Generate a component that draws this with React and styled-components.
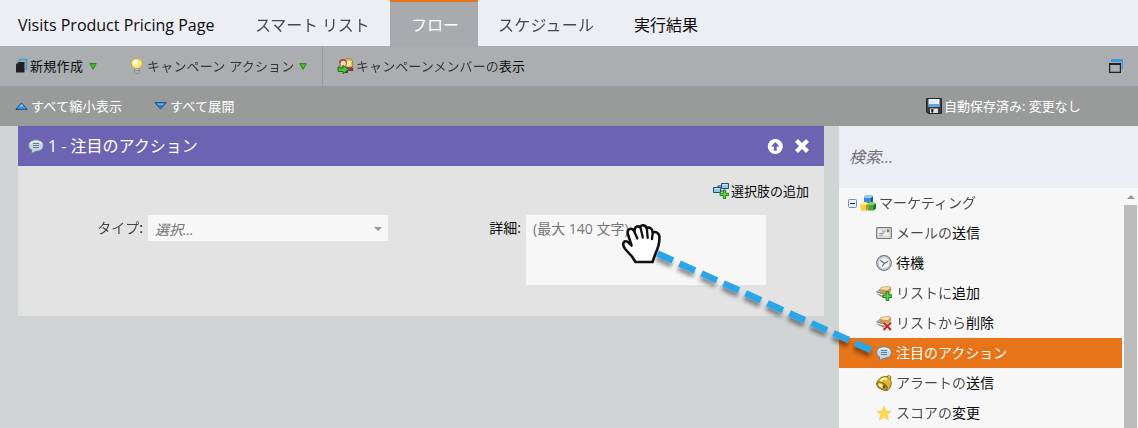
import React from "react";
import styled, { createGlobalStyle, css } from "styled-components";

const GlobalStyle = createGlobalStyle`
  * { box-sizing: border-box; }
  body {
    margin: 0;
    overflow: hidden;
    font-family: "Open Sans", "Noto Sans CJK JP", sans-serif;
    font-size: 13px;
    color: #0c0c0c;
  }
  svg { display: block; flex: none; }
`;

const Page = styled.div`
  position: relative;
  display: flex;
  flex-direction: column;
  width: 1138px;
  height: 428px;
  overflow: hidden;
  background: #d1d4d4;
`;

const TabBar = styled.nav`
  display: flex;
  height: 46px;
  padding-left: 18px;
  background: #edeef4;
`;

const Tab = styled.div`
  width: ${(p) => p.$width}px;
  height: 46px;
  padding-left: ${(p) => p.$indent || 0}px;
  padding-top: 3px;
  font-size: 16px;
  line-height: 44px;
  letter-spacing: ${(p) => p.$spacing || 0}px;
  white-space: nowrap;
  ${(p) =>
    p.$active &&
    css`
      padding-top: 1px;
      color: #fff;
      background: #a8aaad;
      border-top: 2px solid #e97318;
    `}
`;

const Toolbar = styled.div`
  display: flex;
  align-items: center;
  height: 40px;
  background: #abadb0;
`;

const ToolGroup = styled.div`
  display: flex;
  align-items: center;
  width: ${(p) => p.$width}px;
  height: 40px;
  padding-left: ${(p) => p.$indent}px;
  gap: ${(p) => p.$gap || 2}px;
  border-right: ${(p) => (p.$divider ? "1px solid #96989b" : "0")};
`;

const Label = styled.span`
  line-height: 20px;
  white-space: nowrap;
  letter-spacing: ${(p) => p.$spacing || 0}px;
`;

const KanaSpan = styled.span`
  opacity: 0.74;
`;

const Spacer = styled.div`
  flex: 1;
`;

const MenuCaret = styled.span`
  padding-left: ${(p) => p.$gap || 0}px;
`;

const WindowButton = styled.div`
  padding-right: 15px;
`;

const SubBar = styled(Toolbar)`
  background: #999a9a;
  color: #fff;
`;

const Main = styled.main`
  display: flex;
  height: 302px;
  padding-left: 18px;
`;

const Card = styled.section`
  width: 806px;
  height: 190px;
  margin-right: 15px;
  background: #e3e3e3;
`;

const CardHeader = styled.header`
  display: flex;
  align-items: center;
  height: 40px;
  padding: 0 14px 0 10px;
  gap: 4px;
  color: #fff;
  font-size: 16px;
  background: #6c64b3;
`;

const CardActions = styled.div`
  display: flex;
  align-items: center;
  gap: 11px;
`;

const AddChoice = styled.div`
  display: flex;
  justify-content: flex-end;
  align-items: center;
  height: 49px;
  padding-right: 15px;
  gap: 2px;
`;

const Form = styled.div`
  display: flex;
  align-items: flex-start;
  font-size: 14px;
`;

const FieldLabel = styled.label`
  width: ${(p) => p.$width}px;
  padding-right: 5px;
  line-height: 26px;
  text-align: right;
  white-space: nowrap;
`;

const Select = styled.div`
  display: flex;
  align-items: center;
  justify-content: space-between;
  width: 240px;
  height: 26px;
  padding: 1px 6px 0 7px;
  color: #737373;
  font-style: italic;
  background: #f7f7f7;
`;

const TextArea = styled.div`
  width: 240px;
  height: 70px;
  padding: 0 7px;
  line-height: 28px;
  color: #777;
  background: #f7f7f7;
`;

const Sidebar = styled.aside`
  width: 299px;
  background: #f7f7f7;
`;

const Search = styled.div`
  height: 62px;
  padding: 1px 0 0 10px;
  line-height: 60px;
  color: #70727a;
  font-size: 16px;
  font-style: italic;
  background: #edeef4;
`;

const TreeArea = styled.div`
  display: flex;
  height: 240px;
  overflow: hidden;
`;

const Tree = styled.div`
  width: 283px;
`;

const TreeRow = styled.div`
  display: flex;
  align-items: center;
  height: 30px;
  padding-left: ${(p) => (p.$root ? 9 : 37)}px;
  gap: ${(p) => (p.$root ? 3 : 4)}px;
  font-size: 14px;
  color: ${(p) => (p.$selected ? "#fff" : "#0c0c0c")};
  background: ${(p) => (p.$selected ? "#e77419" : "transparent")};
`;

const ScrollBar = styled.div`
  display: flex;
  flex-direction: column;
  width: 13px;
  margin-left: 2px;
`;

const ScrollArrow = styled.div`
  display: flex;
  align-items: center;
  justify-content: center;
  height: 17px;
`;

const ScrollThumb = styled.div`
  flex: 1;
  background: #bcbcbc;
`;

const DragOverlay = styled.svg`
  position: absolute;
  left: 0;
  top: 0;
  pointer-events: none;
`;

/* Kana runs are drawn lighter than kanji and latin. */
function Jp({ children, plain }) {
  if (plain) return children;
  return children
    .split(/([\u3040-\u30ff]+)/)
    .map((part, i) => (i % 2 ? <KanaSpan key={i}>{part}</KanaSpan> : part));
}

const Svg = ({ w = 16, h = 16, children }) => (
  <svg width={w} height={h} viewBox={`0 0 ${w} ${h}`}>
    {children}
  </svg>
);

const NewIcon = () => (
  <Svg w={13} h={16}>
    <path d="M4.500 3.500V1.500h7v9.500H10" fill="none" stroke="#3d9bdc" strokeWidth="1.600" />
    <path d="M4 4h5.500v10.500H1V6.500z" fill="#202123" />
    <path d="M1 6l3-2.500V6z" fill="#3a3c3e" />
  </Svg>
);

const CaretDown = () => (
  <Svg w={8} h={7}>
    <path d="M.7.6h6.600L4 6.300z" fill="#43ba2d" stroke="#238016" strokeWidth=".9" />
  </Svg>
);

const BulbIcon = () => (
  <Svg w={14}>
    <path d="M4.500 11C4.200 9 1.300 8.300 1.300 5.500A5.500 5 0 0 1 12.300 5.500c0 2.800-2.900 3.500-3.200 5.500z" fill="#ffe373" stroke="#c9a136" strokeWidth=".8" />
    <ellipse cx="5.500" cy="4.800" rx="2.800" ry="3" fill="#fffbdc" />
    <path d="M4.500 10.800h4.800v3.600l-1.200 1.300H5.700l-1.200-1.300z" fill="#d6d9dc" stroke="#6d6f72" strokeWidth=".7" />
    <path d="M4.600 12.500h4.600M4.800 14h4.200" stroke="#6d6f72" strokeWidth=".7" />
  </Svg>
);

const PeopleIcon = () => (
  <Svg w={17}>
    <path d="M8 13V10l2-1.500h4l2.300 2V13z" fill="#9b322b" />
    <path d="M10 9.500l2 2.500 2-2.500" fill="#3d6fae" />
    <path d="M8 9V3.500C8 1.500 9.700.5 11.800.5S15.600 1.500 15.600 4v5z" fill="#f3bd45" stroke="#9d6d1c" strokeWidth=".7" />
    <ellipse cx="11.800" cy="5.600" rx="2.300" ry="2.900" fill="#ffe6bd" />
    <path d="M5 10l2-1 4 2.500V15H7z" fill="#25457b" />
    <circle cx="6" cy="4.800" r="3.900" fill="#8a5a30" />
    <ellipse cx="6.200" cy="5.800" rx="2.700" ry="3" fill="#fbd8aa" />
    <path d="M1 9v4.500h5V16l5.500-4.500L6 7.300v2.800H3V9z" fill="#55c238" stroke="#176814" strokeWidth=".9" />
  </Svg>
);

const WindowIcon = () => (
  <Svg w={14} h={14}>
    <path d="M2 0h12v10h-1.400V3H2z" fill="#3d9bdc" />
    <path d="M.6 4.500h10.800v8.900H.6z" fill="#acaeb1" stroke="#202123" strokeWidth="1.200" />
    <path d="M0 4h12v2H0z" fill="#202123" />
  </Svg>
);

const CollapseIcon = () => (
  <Svg w={13} h={8}>
    <path d="M.8 7.400L6.500.9l5.700 6.500z" fill="#3799df" stroke="#164b80" strokeWidth=".9" />
    <path d="M4.500 4.500l2-2.200 2 2.200z" fill="#9cd3f6" />
  </Svg>
);

const ExpandIcon = () => (
  <Svg w={13} h={8}>
    <path d="M.8.6h11.400L6.500 7.100z" fill="#2c82c8" stroke="#164b80" strokeWidth=".9" />
    <path d="M3 1.500h7L9 2.700H4z" fill="#77bce9" />
  </Svg>
);

const SaveIcon = () => (
  <Svg>
    <path d="M.5.5h15v15H2L.5 14z" fill="#3b3e43" stroke="#24262a" />
    <path d="M2.500 1h11v7.500h-11z" fill="#f6fafd" />
    <path d="M2.500 6h11v2.700h-11z" fill="#5aa7df" />
    <path d="M4 3h8M4 5h8" stroke="#bcd9ec" strokeWidth=".8" />
    <path d="M4 10.500h8V15H4z" fill="#dedfe0" />
    <path d="M5.300 11h2v3.500h-2z" fill="#17191b" />
  </Svg>
);

const SpeechIcon = () => (
  <Svg>
    <path d="M8 1.800c4.400 0 7.400 2.200 7.400 5.700 0 3.600-3 5.700-7 5.700L3.200 15.400l.6-3.300C1.700 11.300.6 9.700.6 7.500.6 4 3.600 1.800 8 1.800z" fill="#c3d7e3" stroke="#647c8d" strokeWidth=".9" />
    <path d="M2.500 6C4 2.700 12 2.500 13.500 6" fill="none" stroke="#eef6fa" strokeWidth="1.200" />
    <path d="M5 5.500h6M5 7.500h6M5 9.500h6" stroke="#667e92" strokeWidth="1" />
  </Svg>
);

const UpIcon = () => (
  <Svg>
    <circle cx="8.300" cy="8.500" r="7.500" fill="#fff" />
    <path d="M8.300 4l4.300 4.500H9.800v4.200h-3V8.500H4z" fill="#6c64b3" />
  </Svg>
);

const CloseIcon = () => (
  <Svg>
    <path d="M2.500 2.500l11 11m0-11l-11 11" stroke="#fff" strokeWidth="4.200" />
  </Svg>
);

const ChoiceIcon = () => (
  <Svg>
    <path d="M5 6V3h4M5 8h5" stroke="#333" fill="none" />
    <path d="M8.500.500h7v5h-7z" fill="#8cc6ec" stroke="#264f71" />
    <path d="M.500 4.500h7v5h-7z" fill="#8cc6ec" stroke="#264f71" />
    <path d="M1.500 5.800h5M9.500 1.800h5" stroke="#d5effc" />
    <path d="M10.400 7h2.200v3.300H16v2.200h-3.400V16h-2.200v-3.500H7v-2.200h3.400z" fill="#62dd32" stroke="#167315" strokeWidth=".9" />
  </Svg>
);

const SelectArrow = () => (
  <Svg w={8} h={4}>
    <path d="M0 0h8L4 4z" fill="#969696" />
  </Svg>
);

const MinusIcon = () => (
  <Svg w={9} h={9}>
    <rect x=".5" y=".5" width="8" height="8" rx="1" fill="#e9f2fc" stroke="#778eb0" />
    <path d="M2 4.500h5" stroke="#142d55" />
  </Svg>
);

const BlocksIcon = () => (
  <Svg>
    <path d="M4 1.500L6 .3h5.500l1.500 1v5L11 8H4z" fill="#3b88cd" />
    <path d="M4 1.500L6 .3h5.500l1.500 1L11 3H4.500z" fill="#9ccaf0" />
    <path d="M11 3l2-1.500v5L11 8z" fill="#215890" />
    <path d="M7.500 9l2-1.700h4L16 8.500v5L13.500 15.500H8z" fill="#45a83a" />
    <path d="M7.500 9l2-1.700h4L16 8.500 13.500 10H8z" fill="#8ad568" />
    <path d="M13.500 10L16 8.500v5l-2.500 2z" fill="#237426" />
    <path d="M0 8.500L2 7.300h4L8.300 8.500v5L6 15.700H.8z" fill="#f6cf45" />
    <path d="M0 8.500L2 7.300h4l2.300 1.200L6 10H.5z" fill="#fff0a0" />
    <path d="M6 10l2.300-1.500v5L6 15.700z" fill="#c7901b" />
  </Svg>
);

const MailIcon = () => (
  <Svg>
    <rect x=".7" y="2.700" width="14.600" height="10.800" rx=".8" fill="#ededed" stroke="#777" strokeWidth="1.200" />
    <path d="M2 12h12V4" fill="none" stroke="#c9c9c9" />
    <path d="M10.800 4.300h2.500v2.900h-2.500z" fill="#a86e58" />
    <path d="M6 5.300q1.500 1.400 3.500 0M6 6.700q1.500 1 3.500 0" fill="none" stroke="#949494" strokeWidth=".8" />
    <path d="M3.200 8.500h4.500M3.200 10.300h3.500" stroke="#6f93bd" strokeWidth=".9" />
  </Svg>
);

const ClockIcon = () => (
  <Svg>
    <circle cx="8" cy="8" r="7.300" fill="#eef2f6" stroke="#6d7379" strokeWidth="1.200" />
    <circle cx="8" cy="8" r="5.900" fill="none" stroke="#c0c7ce" strokeWidth="1.200" />
    <path d="M4.300 5.300l4 3L12 6.600M8.300 8.300L6.300 11.400" fill="none" stroke="#5f6d7c" strokeWidth="1.100" />
  </Svg>
);

const Stack = () => (
  <>
    <path d="M.5 6.500L4 5l11-1v3.500L11 12.500H6.500L1.500 9.500z" fill="#8f8d86" />
    <path d="M1.500 8l4 1.700H11L15 6" fill="none" stroke="#eee7db" strokeWidth="1.200" />
    <path d="M3.500 4.500C4 2.500 8 1.300 13.500 1.800l1.700 1v3L11 8.500 4 7.500z" fill="#d09a55" />
    <path d="M3.500 4.500C4 2.500 8 1.300 13.500 1.800l1.500 1L11.500 5.500z" fill="#fae3ae" stroke="#af854d" strokeWidth=".6" />
    <path d="M.5 6.500L3.500 5l.5 2.500z" fill="#dedbd3" stroke="#82817c" strokeWidth=".6" />
  </>
);

const ListAddIcon = () => (
  <Svg>
    <Stack />
    <path d="M10.200 6.700h2.600v3.200H16v2.600h-3.200v3.200h-2.600v-3.200H7V9.900h3.200z" fill="#5bd439" stroke="#187117" strokeWidth=".9" />
  </Svg>
);

const ListRemoveIcon = () => (
  <Svg>
    <Stack />
    <path d="M7.500 7.500l7.500 7.500m0-7.500L7.500 15" stroke="#f7e5df" strokeWidth="3" />
    <path d="M7.500 7.500l7.500 7.500m0-7.500L7.500 15" stroke="#c3221f" strokeWidth="1.900" />
  </Svg>
);

const BellIcon = () => (
  <Svg>
    <circle cx="12.800" cy="2.800" r="2" fill="#ffe98b" stroke="#9b7a10" strokeWidth="1.100" />
    <path d="M1 8c0-3 4-6.500 8-6.500 3.500 0 6.300 3 6.200 7-.1 3.500-2.200 6.500-4.200 7C7 15.500 1 12 1 8z" fill="#dcb935" stroke="#806211" strokeWidth=".9" />
    <path d="M4.500 6.500C6 4.200 8.500 3 11 4" fill="none" stroke="#fff5b5" strokeWidth="2" />
    <ellipse cx="6" cy="11" rx="5.900" ry="3.200" transform="rotate(32 6 11)" fill="#b8932a" stroke="#765b0c" strokeWidth=".9" />
    <ellipse cx="4.800" cy="10.600" rx="2.900" ry="1.700" transform="rotate(32 4.800 10.600)" fill="#ffef9a" />
    <circle cx="8" cy="11.700" r="1.400" fill="#5e4912" />
  </Svg>
);

const StarIcon = () => (
  <Svg>
    <path d="M8 1.200l2 4.800 5.200.4-4 3.400 1.300 5.200L8 12.200 3.500 15l1.300-5.200-4-3.400L6 6z" fill="#ffda4a" stroke="#f3c64a" strokeWidth=".6" />
  </Svg>
);

const ITEMS = [
  { text: "メールの送信", icon: MailIcon },
  { text: "待機", icon: ClockIcon },
  { text: "リストに追加", icon: ListAddIcon },
  { text: "リストから削除", icon: ListRemoveIcon },
  { text: "注目のアクション", icon: SpeechIcon, selected: true },
  { text: "アラートの送信", icon: BellIcon },
  { text: "スコアの変更", icon: StarIcon },
];

const DragHint = () => (
  <DragOverlay width="1138" height="428" viewBox="0 0 1138 428">
    <defs>
      <filter id="shade" x="-10%" y="-10%" width="120%" height="130%">
        <feDropShadow dx="-1" dy="4" stdDeviation="2" floodColor="#000" floodOpacity=".45" />
      </filter>
    </defs>
    <path d="M657.500 253.500L872 350.500" fill="none" stroke="#2ba5e9" strokeWidth="6.500" strokeDasharray="16.900 7.250" filter="url(#shade)" />
    <path
      d="M635.500 262L632 256.500 625.200 249C623 246 622.800 243 624.500 241.500 626.500 240.500 629 242.500 631.500 245.500L628 234.500C627 231 628.500 229 630.500 228.800 632.500 228.700 633.600 230 634.300 231.500L635 228.500C635.500 226.500 638 225.500 640 227.200 641 224.500 646 224.500 646.800 228.500 649 226.500 652.500 228 652.800 232.500 655.500 231 659.500 233 659.500 237.500 659.500 243 658 248 656 252.500 654.500 256 653.500 259 652.500 262z"
      fill="#fff"
      stroke="#111"
      strokeWidth="2.600"
      strokeLinejoin="round"
    />
    <path d="M634.300 231.500l3 7M640.500 227.500l2.300 10M646.800 228.500l.9 9.300M652.800 232.500l-.8 6.500" fill="none" stroke="#111" strokeWidth="2.300" strokeLinecap="round" />
  </DragOverlay>
);

export default function App() {
  return (
    <Page>
      <GlobalStyle />
      <TabBar>
        <Tab $width={237}>Visits Product Pricing Page</Tab>
        <Tab $width={135} $spacing={-0.15}><Jp>スマート リスト</Jp></Tab>
        <Tab $width={88} $indent={21} $active>フロー</Tab>
        <Tab $width={156} $indent={20} $spacing={0.2}><Jp>スケジュール</Jp></Tab>
        <Tab $width={100}>実行結果</Tab>
      </TabBar>
      <Toolbar>
        <ToolGroup $width={130} $indent={15}>
          <NewIcon />
          <Label $spacing={0.3}>新規作成</Label>
          <MenuCaret $gap={4}><CaretDown /></MenuCaret>
        </ToolGroup>
        <ToolGroup $width={193} $indent={0} $gap={3} $divider>
          <BulbIcon />
          <Label $spacing={0.2}><Jp>キャンペーン アクション</Jp></Label>
          <MenuCaret $gap={1}><CaretDown /></MenuCaret>
        </ToolGroup>
        <ToolGroup $width={220} $indent={14}>
          <PeopleIcon />
          <Label $spacing={0.08}><Jp>キャンペーンメンバーの表示</Jp></Label>
        </ToolGroup>
        <Spacer />
        <WindowButton><WindowIcon /></WindowButton>
      </Toolbar>
      <SubBar>
        <ToolGroup $width={154} $indent={15} $gap={3}>
          <CollapseIcon />
          <Label $spacing={0.25}>すべて縮小表示</Label>
        </ToolGroup>
        <ToolGroup $width={772} $indent={0} $gap={3}>
          <ExpandIcon />
          <Label $spacing={0.25}>すべて展開</Label>
        </ToolGroup>
        <ToolGroup $width={200} $indent={0}>
          <SaveIcon />
          <Label>自動保存済み: 変更なし</Label>
        </ToolGroup>
      </SubBar>
      <Main>
        <Card>
          <CardHeader>
            <SpeechIcon />
            <Label>1 - 注目のアクション</Label>
            <Spacer />
            <CardActions><UpIcon /><CloseIcon /></CardActions>
          </CardHeader>
          <AddChoice>
            <ChoiceIcon />
            <Label>選択肢の追加</Label>
          </AddChoice>
          <Form>
            <FieldLabel $width={130}><Jp>タイプ:</Jp></FieldLabel>
            <Select><span>選択...</span><SelectArrow /></Select>
            <FieldLabel $width={138}>詳細:</FieldLabel>
            <TextArea>(最大 140 文字)</TextArea>
          </Form>
        </Card>
        <Sidebar>
          <Search>検索...</Search>
          <TreeArea>
            <Tree>
              <TreeRow $root>
                <MinusIcon />
                <BlocksIcon />
                <Label><Jp>マーケティング</Jp></Label>
              </TreeRow>
              {ITEMS.map(({ text, icon: Icon, selected }) => (
                <TreeRow key={text} $selected={selected}>
                  <Icon />
                  <Label><Jp plain={selected}>{text}</Jp></Label>
                </TreeRow>
              ))}
            </Tree>
            <ScrollBar>
              <ScrollArrow>
                <Svg w={8} h={4}><path d="M0 4h8L4 0z" fill="#929a9d" /></Svg>
              </ScrollArrow>
              <ScrollThumb />
            </ScrollBar>
          </TreeArea>
        </Sidebar>
      </Main>
      <DragHint />
    </Page>
  );
}
